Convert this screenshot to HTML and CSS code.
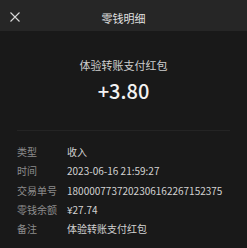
FILE: index.html
```html
<!DOCTYPE html>
<html lang="zh-CN">
  <head>
    <meta charset="UTF-8" />
    <meta name="viewport" content="width=device-width, initial-scale=1.0" />
    <title>零钱明细</title>
    <link rel="stylesheet" href="styles.css">
  </head>
  <body>
    <header class="topbar">
      <svg class="close" width="10" height="10" viewBox="0 0 10 10">
        <path d="M0.5 0.5 L9.5 9.5 M9.5 0.5 L0.5 9.5" stroke="#d8d8d8" stroke-width="1.1" fill="none" />
      </svg>
      <div class="topbar-title">零钱明细</div>
    </header>
    <main>
      <section class="summary">
        <div class="summary-name">体验转账支付红包</div>
        <div class="summary-amount">+3.80</div>
      </section>
      <ul class="detail">
        <li class="detail-row"><span class="detail-label">类型</span><span class="detail-value">收入</span></li>
        <li class="detail-row"><span class="detail-label">时间</span><span class="detail-value">2023-06-16 21:59:27</span></li>
        <li class="detail-row"><span class="detail-label">交易单号</span><span class="detail-value">1800007737202306162267152375</span></li>
        <li class="detail-row"><span class="detail-label">零钱余额</span><span class="detail-value">¥27.74</span></li>
        <li class="detail-row"><span class="detail-label">备注</span><span class="detail-value">体验转账支付红包</span></li>
      </ul>
    </main>
  </body>
</html>
```

FILE: styles.css
```css
body {
  margin: 0;
  background-color: #191919;
  font-family: "Noto Sans CJK SC", "Noto Sans", sans-serif;
  color: #d6d6d6;
}
.topbar {
  position: relative;
  height: 31px;
  background-color: #262626;
  display: flex;
  align-items: center;
  justify-content: center;
}
.close {
  position: absolute;
  left: 10px;
  top: 12px;
}
.topbar-title {
  font-size: 11px;
  color: #e0e0e0;
  padding-top: 4px;
}
.summary {
  margin: 0 17px;
  padding-top: 26px;
  height: 73px;
  border-bottom: 1px solid #242424;
  text-align: center;
}
.summary-name {
  font-size: 11px;
  line-height: 16px;
  color: #cfcfcf;
}
.summary-amount {
  margin-top: 5px;
  font-size: 20px;
  line-height: 26px;
  font-weight: 500;
  color: #f2f2f2;
}
.detail {
  list-style: none;
  margin: 0;
  padding: 11px 17px 0;
}
.detail-row {
  display: flex;
  height: 19.3px;
  align-items: center;
  font-size: 10px;
}
.detail-label {
  width: 50px;
  color: #8c8c8c;
}
.detail-value {
  color: #d2d2d2;
}
```
